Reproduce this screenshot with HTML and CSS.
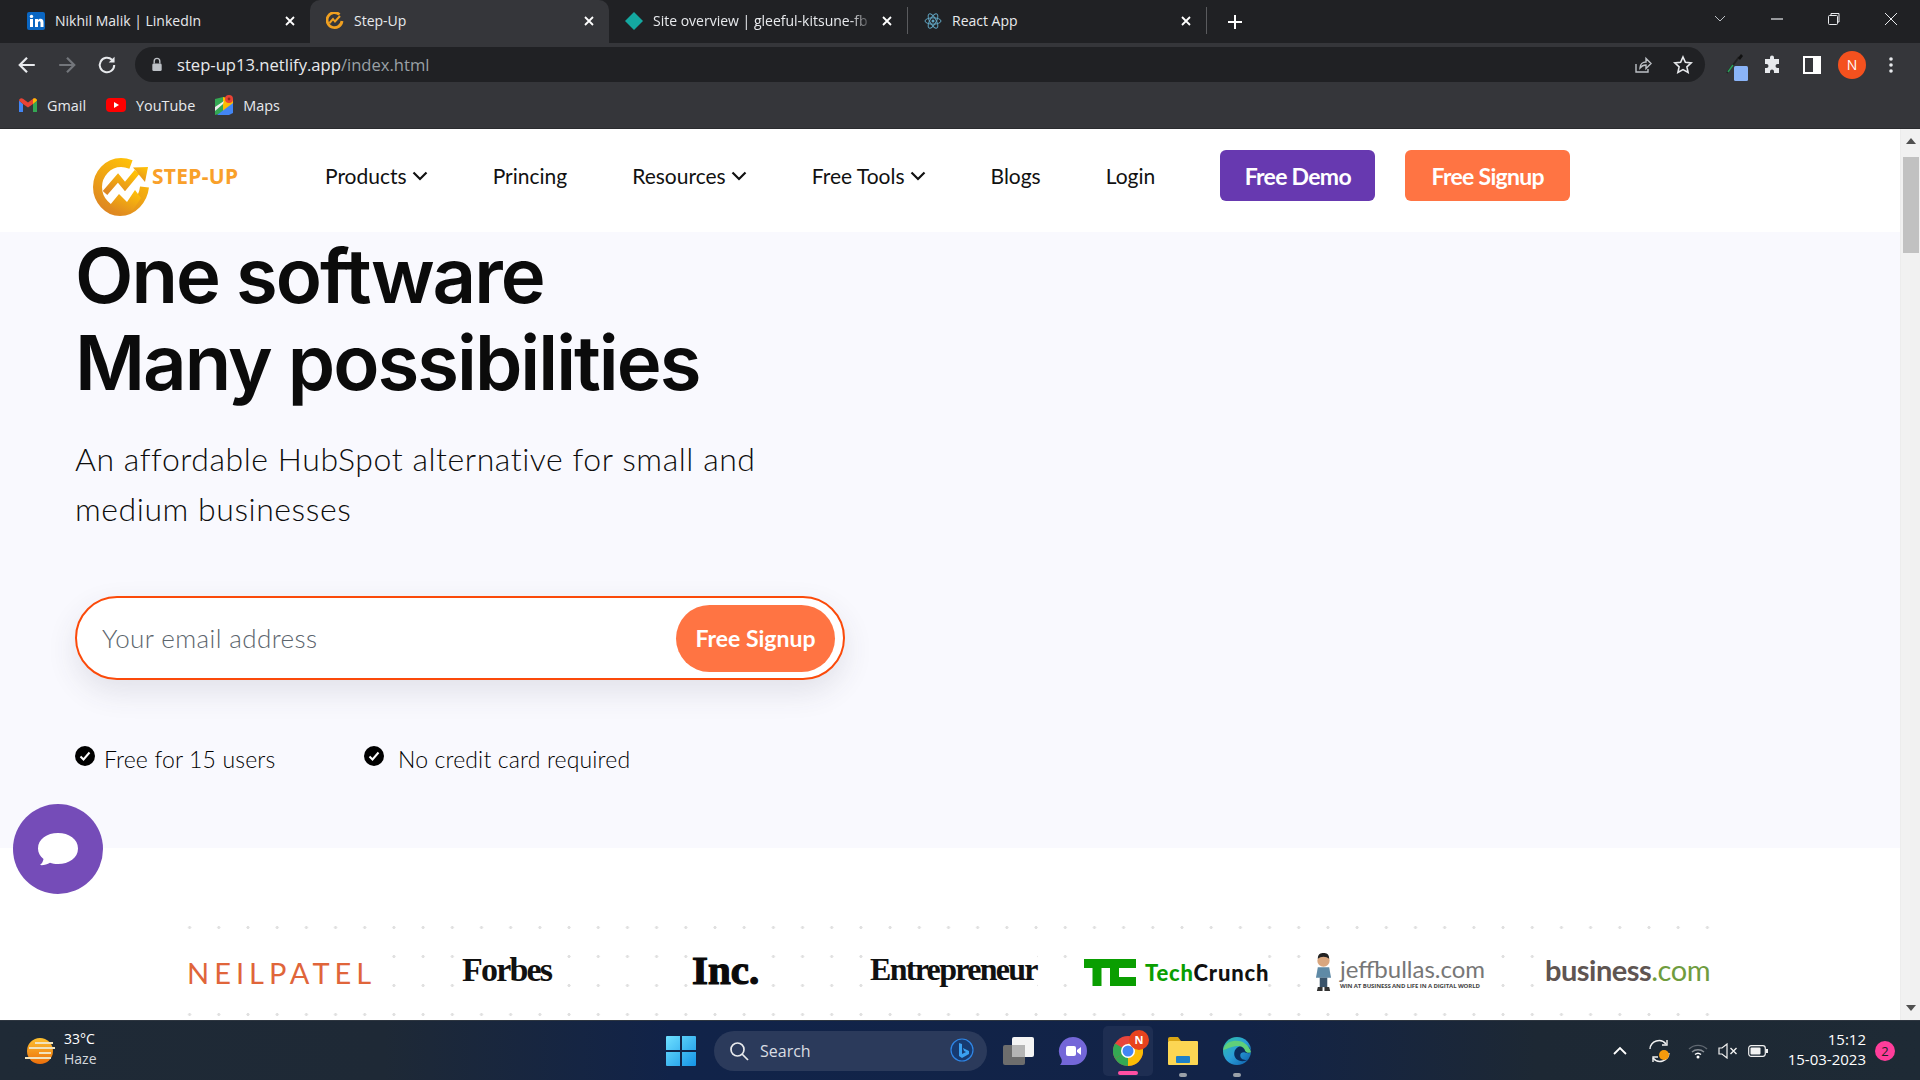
FILE: index.html
```html
<!DOCTYPE html>
<html lang="en">
<head>
<meta charset="utf-8">
<title>Step-Up</title>
<link rel="stylesheet" href="styles.css">
</head>
<body>
<header class="chrome">
  <div class="tabstrip">
    <div class="tab">
      <svg class="favicon" viewBox="0 0 18 18"><rect width="18" height="18" rx="2" fill="#0a66c2"/><rect x="3" y="7" width="3" height="8" fill="#fff"/><circle cx="4.5" cy="4.4" r="1.7" fill="#fff"/><path d="M8 7h3v1.2c.6-.9 1.500-1.400 2.600-1.400 2 0 2.900 1.300 2.900 3.600V15h-3v-4c0-1.100-.4-1.700-1.200-1.700S11 10 11 11v4H8z" fill="#fff"/></svg>
      <span class="tab-title">Nikhil Malik | LinkedIn</span>
      <svg class="tab-close" viewBox="0 0 12 12"><path d="M2 2l8 8M10 2l-8 8" stroke="#fff" stroke-width="1.800"/></svg>
    </div>
    <div class="tab tab-active">
      <svg class="favicon" viewBox="0 0 18 18"><path d="M13.500 2.500A7.500 7.500 0 1 0 16 9" fill="none" stroke="#f0a020" stroke-width="2.800"/><path d="M3.500 11l3.500-4 2 2.500L14 4" fill="none" stroke="#f0a020" stroke-width="2"/></svg>
      <span class="tab-title">Step-Up</span>
      <svg class="tab-close" viewBox="0 0 12 12"><path d="M2 2l8 8M10 2l-8 8" stroke="#fff" stroke-width="1.800"/></svg>
    </div>
    <div class="tab tab-sep">
      <svg class="favicon" viewBox="0 0 18 18"><path d="M9 0l9 9-9 9-9-9z" fill="#14a8a0"/></svg>
      <span class="tab-title tab-title-fade">Site overview | gleeful-kitsune-fb</span>
      <svg class="tab-close" viewBox="0 0 12 12"><path d="M2 2l8 8M10 2l-8 8" stroke="#fff" stroke-width="1.800"/></svg>
    </div>
    <div class="tab tab-sep">
      <svg class="favicon" viewBox="0 0 18 18"><g fill="none" stroke="#61a5c2" stroke-width="1"><ellipse cx="9" cy="9" rx="8" ry="3.200"/><ellipse cx="9" cy="9" rx="8" ry="3.200" transform="rotate(60 9 9)"/><ellipse cx="9" cy="9" rx="8" ry="3.200" transform="rotate(120 9 9)"/></g><circle cx="9" cy="9" r="1.500" fill="#61a5c2"/></svg>
      <span class="tab-title">React App</span>
      <svg class="tab-close" viewBox="0 0 12 12"><path d="M2 2l8 8M10 2l-8 8" stroke="#fff" stroke-width="1.800"/></svg>
    </div>
    <svg class="new-tab" viewBox="0 0 16 16"><path d="M8 1v14M1 8h14" stroke="#fff" stroke-width="2"/></svg>
    <div class="window-controls">
      <svg class="win-icon" viewBox="0 0 14 14"><path d="M2 4l5 5 5-5" fill="none" stroke="#bdc1c6" stroke-width="1"/></svg>
      <svg class="win-icon" viewBox="0 0 14 14"><path d="M1 7h12" stroke="#e8eaed" stroke-width="1.200"/></svg>
      <svg class="win-icon" viewBox="0 0 14 14"><path d="M4 3V1.500h8V10h-1.500" fill="none" stroke="#e8eaed"/><rect x="1.500" y="3.500" width="9" height="9" rx="1" fill="none" stroke="#e8eaed"/></svg>
      <svg class="win-icon" viewBox="0 0 14 14"><path d="M1 1l12 12M13 1L1 13" stroke="#e8eaed" stroke-width="1"/></svg>
    </div>
  </div>
  <div class="toolbar">
    <svg class="nav-btn" viewBox="0 0 18 18"><path d="M16 9H3M9 2.500L2.500 9 9 15.500" fill="none" stroke="#e8eaed" stroke-width="2"/></svg>
    <svg class="nav-btn" viewBox="0 0 18 18"><path d="M2 9h13M9 2.500L15.500 9 9 15.500" fill="none" stroke="#73767b" stroke-width="2"/></svg>
    <svg class="nav-btn" viewBox="0 0 18 18"><path d="M15.500 9A6.500 6.500 0 1 1 13.500 4.300" fill="none" stroke="#e8eaed" stroke-width="1.800"/><path d="M15.800 1.500v5.300h-5.300z" fill="#e8eaed"/></svg>
    <div class="omnibox">
      <svg class="lock" viewBox="0 0 12 16"><path d="M3 7V4.500a3 3 0 0 1 6 0V7" fill="none" stroke="#bdc1c6" stroke-width="1.500"/><rect x="1" y="7" width="10" height="8" rx="1.500" fill="#bdc1c6"/></svg>
      <span class="url"><span class="url-host">step-up13.netlify.app</span><span class="url-path">/index.html</span></span>
      <svg class="omni-icon" viewBox="0 0 20 20"><path d="M3 9v8h12v-3" fill="none" stroke="#bdc1c6" stroke-width="1.400"/><path d="M7 13c0-4 3-6 6-6V3.500l5 5-5 5V10c-2.500 0-4.500 1-6 3z" fill="none" stroke="#bdc1c6" stroke-width="1.400"/></svg>
      <svg class="omni-icon" viewBox="0 0 20 20"><path d="M10 2l2.400 5.300 5.800.6-4.300 3.900 1.200 5.700-5.100-2.900-5.100 2.900 1.200-5.700L1.800 7.900l5.800-.6z" fill="none" stroke="#e8eaed" stroke-width="1.600"/></svg>
    </div>
    <div class="toolbar-actions">
      <svg class="tool-ext" viewBox="0 0 24 30"><path d="M2 21L14 5" stroke="#222" stroke-width="2"/><path d="M3 20l5-7" stroke="#2aa05a" stroke-width="1.500"/><path d="M13 6l3-4 2 2-3 4z" fill="#111"/><rect x="9" y="14" width="14" height="15" rx="1.500" fill="#8ab4f8"/></svg>
      <svg class="tool-icon" viewBox="0 0 20 20"><path d="M7 2.500a2 2 0 0 1 4 0V4h5v5h-1.500a2 2 0 0 0 0 4H16v5h-5v-1.500a2 2 0 0 0-4 0V18H2v-5h1.500a2 2 0 0 0 0-4H2V4h5z" fill="#e8eaed"/></svg>
      <svg class="tool-icon" viewBox="0 0 20 20"><rect x="2" y="2" width="16" height="16" fill="none" stroke="#fff" stroke-width="2"/><rect x="11" y="2" width="7" height="16" fill="#fff"/></svg>
      <span class="avatar">N</span>
      <svg class="tool-menu" viewBox="0 0 6 18"><circle cx="3" cy="3" r="1.800" fill="#e8eaed"/><circle cx="3" cy="9" r="1.800" fill="#e8eaed"/><circle cx="3" cy="15" r="1.800" fill="#e8eaed"/></svg>
    </div>
  </div>
  <div class="bookmarks">
    <div class="bookmark">
      <svg class="bm-icon" viewBox="0 0 18 14"><path d="M0 2.500V14h4V6z" fill="#4285f4"/><path d="M14 6v8h4V2.500z" fill="#34a853"/><path d="M0 2.500C0 .5 2.300-.6 4 .7L9 4.500 14 .7C15.700-.6 18 .5 18 2.500L14 6 9 9.500 4 6z" fill="#ea4335"/><path d="M14 .7C15.700-.6 18 .5 18 2.500L14 6z" fill="#fbbc04"/></svg>
      <span>Gmail</span>
    </div>
    <div class="bookmark">
      <svg class="bm-icon bm-yt" viewBox="0 0 20 14"><rect width="20" height="14" rx="4" fill="#f00"/><path d="M8 4l5 3-5 3z" fill="#fff"/></svg>
      <span>YouTube</span>
    </div>
    <div class="bookmark">
      <svg class="bm-icon bm-maps" viewBox="0 0 18 20"><path d="M0 4l8-2v16l-8 2z" fill="#34a853"/><path d="M8 2l10 2v14L8 18z" fill="#fbbc04"/><path d="M2 20L18 8v10l-4 2z" fill="#4285f4"/><path d="M0 12L9 6 8 9 0 16z" fill="#eee"/><circle cx="14" cy="4" r="4" fill="#ea4335"/><circle cx="14" cy="4" r="1.400" fill="#8c2a20"/></svg>
      <span>Maps</span>
    </div>
  </div>
</header>

<div class="viewport">
  <div class="page">
    <nav class="site-nav">
      <a class="brand">
        <svg class="brand-mark" viewBox="0 0 56 58">
          <defs><linearGradient id="lg" x1="0.800" y1="0" x2="0.200" y2="1"><stop offset="0" stop-color="#ffc107"/><stop offset="1" stop-color="#de8722"/></linearGradient></defs>
          <path d="M38 6.500C34 5 31 4.500 28 4.500 15 4.500 4.500 16 4.500 29S15 53.500 27 53.500C40 53.500 50 42 51.500 29" fill="none" stroke="url(#lg)" stroke-width="9"/>
          <path d="M12 35L25 20l7 8.500L44 14" fill="none" stroke="url(#lg)" stroke-width="6"/>
          <path d="M40 9.500L55 9 52 24z" fill="url(#lg)"/>
          <path d="M17 47l9-11 8 8 8-12 6 8-8 12-14 4z" fill="url(#lg)"/>
        </svg>
        <span class="brand-name">STEP-UP</span>
      </a>
      <ul class="menu">
        <li class="menu-item">Products<svg class="chev" viewBox="0 0 16 10"><path d="M1.500 1.500L8 8l6.500-6.500" fill="none" stroke="#111" stroke-width="2.200"/></svg></li>
        <li class="menu-item">Princing</li>
        <li class="menu-item">Resources<svg class="chev" viewBox="0 0 16 10"><path d="M1.500 1.500L8 8l6.500-6.500" fill="none" stroke="#111" stroke-width="2.200"/></svg></li>
        <li class="menu-item">Free Tools<svg class="chev" viewBox="0 0 16 10"><path d="M1.500 1.500L8 8l6.500-6.500" fill="none" stroke="#111" stroke-width="2.200"/></svg></li>
        <li class="menu-item">Blogs</li>
        <li class="menu-item">Login</li>
      </ul>
      <a class="btn btn-demo">Free Demo</a>
      <a class="btn btn-signup">Free Signup</a>
    </nav>

    <section class="hero">
      <h1 class="hero-title">One software<br>Many possibilities</h1>
      <p class="hero-sub">An affordable HubSpot alternative for small and<br>medium businesses</p>
      <form class="signup">
        <span class="signup-placeholder">Your email address</span>
        <span class="signup-btn">Free Signup</span>
      </form>
      <div class="perks">
        <div class="perk perk-first">
          <svg class="check" viewBox="0 0 20 20"><circle cx="10" cy="10" r="10" fill="#000"/><path d="M5.500 10.500l3 3 6-7" fill="none" stroke="#fff" stroke-width="2"/></svg>
          <span>Free for 15 users</span>
        </div>
        <div class="perk perk-second">
          <svg class="check" viewBox="0 0 20 20"><circle cx="10" cy="10" r="10" fill="#000"/><path d="M5.500 10.500l3 3 6-7" fill="none" stroke="#fff" stroke-width="2"/></svg>
          <span>No credit card required</span>
        </div>
      </div>
    </section>

    <section class="press">
      <div class="press-field">
        <div class="press-row">
          <span class="logo logo-neil">NEILPATEL</span>
          <span class="logo logo-forbes">Forbes</span>
          <span class="logo logo-inc">Inc.</span>
          <span class="logo logo-entre">Entrepreneur</span>
          <span class="logo logo-tc">
            <svg class="tc-mark" viewBox="0 0 52 27"><path d="M0 0h26v9h-8.500v18h-9V9H0z" fill="#0a9e01"/><path d="M26 9h26v-9H26zM26 9v18h26v-9H35V9z" fill="#0a9e01"/></svg>
            <span class="tc-text"><span class="tc-green">Tech</span>Crunch</span>
          </span>
          <span class="logo logo-jeff">
            <svg class="jeff-mark" viewBox="0 0 18 40"><circle cx="9" cy="8" r="6.500" fill="#d9a67e"/><path d="M3 6c0-5 3-6 6-6s6 1 6 6c-3-3-9-3-12 0z" fill="#222"/><path d="M3 15h12l2 11H1z" fill="#5f8aa6"/><path d="M5 26h8v10H5z" fill="#39536a"/><path d="M3 36h5v4H2zM10 36h5l1 4h-6z" fill="#333"/></svg>
            <span class="jeff-text"><span class="jeff-name">jeffbullas.com</span><span class="jeff-tag">WIN AT BUSINESS AND LIFE IN A DIGITAL WORLD</span></span>
          </span>
          <span class="logo logo-biz">business<span class="biz-com">.com</span></span>
        </div>
      </div>
    </section>

    <button class="chat-fab" type="button" aria-label="Chat">
      <svg class="chat-icon" viewBox="0 0 42 34"><path d="M21 1c11 0 20 6 20 15.500S32 32 21 32c-3 0-6-.4-8-1.300C10 32.500 6 33.500 3 33c2-1.500 3-3.500 3.500-6C3 24 1 20.500 1 16.500 1 7 10 1 21 1z" fill="#fff"/></svg>
    </button>
  </div>
  <aside class="scrollbar">
    <svg class="sb-arrow" viewBox="0 0 10 6"><path d="M5 0l5 6H0z" fill="#505050"/></svg>
    <div class="sb-track"><div class="sb-thumb"></div></div>
    <svg class="sb-arrow" viewBox="0 0 10 6"><path d="M5 6L0 0h10z" fill="#505050"/></svg>
  </aside>
</div>

<footer class="taskbar">
  <div class="task-weather">
    <svg class="weather-icon" viewBox="0 0 30 26"><defs><linearGradient id="sun" x1="0" y1="0" x2="0" y2="1"><stop offset="0" stop-color="#fdc02f"/><stop offset="1" stop-color="#ec6f0c"/></linearGradient></defs><circle cx="15" cy="13" r="13" fill="url(#sun)"/><path d="M10 5h18M4 10h26M14 15h12M0 20h26" stroke="#f1e3bd" stroke-width="2"/></svg>
    <div class="weather-text"><span class="temp">33°C</span><span class="cond">Haze</span></div>
  </div>
  <div class="task-center">
    <svg class="start" viewBox="0 0 30 30"><defs><linearGradient id="win" x1="0" y1="0" x2="1" y2="1"><stop offset="0" stop-color="#6fe0ff"/><stop offset="1" stop-color="#1594e6"/></linearGradient></defs><path d="M0 1a1 1 0 0 1 1-1h13v14H0zM16 0h13a1 1 0 0 1 1 1v13H16zM0 16h14v14H1a1 1 0 0 1-1-1zM16 16h14v13a1 1 0 0 1-1 1H16z" fill="url(#win)"/></svg>
    <div class="search-pill">
      <svg class="search-icon" viewBox="0 0 20 20"><circle cx="8.500" cy="8.500" r="6.500" fill="none" stroke="#e8eaed" stroke-width="1.700"/><path d="M13 13l6 6" stroke="#e8eaed" stroke-width="1.700"/></svg>
      <span class="search-text">Search</span>
      <svg class="bing" viewBox="0 0 26 26"><circle cx="13" cy="12" r="11" fill="#173a70" stroke="#2f86e6" stroke-width="1.200"/><path d="M10 5l3 1v10l4-2-2-1-1-3 6 3v3l-7 4-3-2z" fill="#3aa0f0"/></svg>
    </div>
    <svg class="task-icon" viewBox="0 0 31 28"><rect y="8" width="22" height="20" rx="2" fill="#6d6d6d"/><rect x="9" width="22" height="20" rx="2" fill="#f4f4f4"/><rect x="9" y="8" width="13" height="12" fill="#b5b5b5"/></svg>
    <svg class="task-icon task-chat" viewBox="0 0 30 30"><path d="M15 1a14 14 0 0 1 0 28H2c2-2 2-4 1.500-6A14 14 0 0 1 15 1z" fill="#7467d8"/><rect x="8" y="10" width="10" height="10" rx="2" fill="#fff"/><path d="M19 14l4-3v8l-4-3z" fill="#fff"/></svg>
    <div class="task-active">
      <svg class="chrome-icon" viewBox="0 0 30 30"><circle cx="15" cy="15" r="15" fill="#e8453c"/><path d="M15 15L2 22.500A15 15 0 0 0 15 30z" fill="#34a853"/><path d="M15 15v15A15 15 0 0 0 28 7.500H15z" fill="#fbbc05"/><path d="M2 22.500A15 15 0 0 1 2 7.500L15 15z" fill="#34a853"/><circle cx="15" cy="15" r="7" fill="#fff"/><circle cx="15" cy="15" r="5.500" fill="#4285f4"/></svg>
      <span class="chrome-badge">N</span>
      <span class="active-bar"></span>
    </div>
    <div class="task-pinned">
      <svg class="task-icon" viewBox="0 0 30 28"><path d="M0 2a2 2 0 0 1 2-2h8l3 4h-13z" fill="#d9a514"/><rect y="4" width="30" height="24" rx="1" fill="#fcd653"/><rect x="8" y="19" width="14" height="7" rx="1" fill="#1d80c8"/></svg>
      <span class="pin-dot"></span>
    </div>
    <div class="task-pinned">
      <svg class="task-icon" viewBox="0 0 30 30"><defs><linearGradient id="edge" x1="0" y1="0" x2="1" y2="1"><stop offset="0" stop-color="#30c1a0"/><stop offset="0.500" stop-color="#2a9ed8"/><stop offset="1" stop-color="#0d5ba8"/></linearGradient></defs><circle cx="15" cy="15" r="15" fill="url(#edge)"/><path d="M30 16c0-4-3-7-8-7-6 0-10 4-10 9 0 4 3 8 9 8 2 0 4-.5 5.500-1.500-1 .2-8 .8-8-5 0-2 2-3.500 5-3 2 .3 4 2 6.500-.5z" fill="#0a2c5c"/><path d="M0 14C2 6 9 4 14 4c8 0 14 5 16 12-2 2-6 1-7-3-2-3-6-4-10-3C8 11 4 13 0 14z" fill="#5fd07a"/></svg>
      <span class="pin-dot"></span>
    </div>
  </div>
  <div class="task-tray">
    <svg class="tray-caret" viewBox="0 0 14 9"><path d="M1 8l6-6 6 6" fill="none" stroke="#fff" stroke-width="1.800"/></svg>
    <svg class="tray-sync" viewBox="0 0 24 24"><path d="M2 10A9 9 0 0 1 18 5M21 14a9 9 0 0 1-16 5" fill="none" stroke="#f2f2f2" stroke-width="1.400"/><path d="M19 1v5h-5M5 23v-5h5" fill="none" stroke="#f2f2f2" stroke-width="1.400"/><circle cx="16" cy="16" r="5" fill="#f59a0c"/></svg>
    <svg class="tray-icon" viewBox="0 0 20 16"><path d="M1 6a13 13 0 0 1 18 0" fill="none" stroke="#5f6770" stroke-width="1.400"/><path d="M4 9a9 9 0 0 1 12 0" fill="none" stroke="#8a9097" stroke-width="1.400"/><path d="M7 11.500a4.500 4.500 0 0 1 6 0" fill="none" stroke="#fff" stroke-width="1.400"/><circle cx="10" cy="14" r="1.500" fill="#fff"/></svg>
    <svg class="tray-icon" viewBox="0 0 20 16"><path d="M1 5h3l5-4v14l-5-4H1z" fill="none" stroke="#f2f2f2" stroke-width="1.200"/><path d="M12.500 5l6 6M18.500 5l-6 6" stroke="#f2f2f2" stroke-width="1.400"/></svg>
    <svg class="tray-icon" viewBox="0 0 20 12"><rect x=".7" y=".7" width="16.600" height="10.600" rx="2.500" fill="none" stroke="#f2f2f2" stroke-width="1.200"/><rect x="2.500" y="2.500" width="10" height="7" rx="1" fill="#f2f2f2"/><rect x="18" y="4" width="2" height="4" fill="#f2f2f2"/></svg>
    <div class="clock"><span>15:12</span><span>15-03-2023</span></div>
    <span class="notif">2</span>
  </div>
</footer>
</body>
</html>
```

FILE: styles.css
```css
* { box-sizing: border-box; }
html, body { margin: 0; padding: 0; }
body {
  width: 1920px;
  height: 1080px;
  overflow: hidden;
  display: flex;
  flex-direction: column;
  font-family: "Open Sans", "Noto Sans", sans-serif;
  background: #fff;
}

/* Browser chrome */
.chrome { height: 129px; flex: none; background: #35363a; color: #e8eaed; border-bottom: 1px solid #2a2b2e; }
.tabstrip { height: 43px; background: #202124; display: flex; align-items: stretch; padding-left: 11px; }
.tab { width: 299px; flex: none; display: flex; align-items: center; padding: 0 14px 2px 16px; font-size: 14px; color: #e8eaed; }
.tab-active { background: #35363a; border-radius: 10px 10px 0 0; }
.tab-sep { position: relative; border-right: 1px solid #5a5b5e; margin: 7px 0 9px; height: 27px; padding-bottom: 0; }
.favicon { width: 18px; height: 18px; flex: none; }
.tab-title { margin-left: 10px; flex: 1; white-space: nowrap; overflow: hidden; }
.tab-title-fade { -webkit-mask-image: linear-gradient(90deg, #000 90%, transparent); mask-image: linear-gradient(90deg, #000 90%, transparent); }
.tab-close { width: 12px; height: 12px; flex: none; margin-left: 8px; }
.new-tab { width: 16px; height: 16px; align-self: center; margin-left: 20px; flex: none; }
.window-controls { margin-left: auto; display: flex; align-items: center; gap: 43px; padding: 0 22px 6px 0; }
.win-icon { width: 14px; height: 14px; }

.toolbar { height: 44px; display: flex; align-items: center; padding: 0 0 1px 17px; }
.nav-btn { width: 20px; height: 20px; margin-right: 20px; flex: none; }
.omnibox { margin-left: -2px; width: 1570px; height: 35px; background: #202124; border-radius: 18px; display: flex; align-items: center; padding: 0 12px 0 16px; flex: none; }
.lock { width: 12px; height: 15px; flex: none; }
.url { margin-left: 14px; font-size: 16.6px; flex: 1; white-space: nowrap; }
.url-host { color: #e8eaed; }
.url-path { color: #9aa0a6; }
.omni-icon { width: 20px; height: 20px; margin-left: 20px; flex: none; }
.toolbar-actions { display: flex; align-items: center; margin-left: 20px; }
.tool-ext { width: 24px; height: 30px; margin-right: 14px; margin-top: 5px; }
.tool-icon { width: 20px; height: 20px; margin-right: 19px; }
.avatar { width: 28px; height: 28px; border-radius: 50%; background: #f4511e; color: #fff; font-size: 14px; display: flex; align-items: center; justify-content: center; margin-left: -3px; margin-right: 22px; }
.tool-menu { width: 6px; height: 18px; }

.bookmarks { height: 41px; display: flex; align-items: center; padding: 0 0 5px 19px; font-size: 14.4px; gap: 20px; }
.bookmark { display: flex; align-items: center; gap: 10px; color: #e8eaed; }
.bm-icon { width: 18px; height: 14px; }
.bm-yt { width: 20px; height: 14px; }
.bm-maps { width: 18px; height: 20px; }

/* Page */
.viewport { flex: 1; display: flex; min-height: 0; }
.page { flex: 1; position: relative; display: flex; flex-direction: column; background: #fff; min-width: 0; overflow: hidden; }

.site-nav { height: 103px; flex: none; background: #fff; display: flex; align-items: center; padding: 0 0 10px 93px; font-family: "Lato", sans-serif; }
.brand { display: flex; align-items: flex-start; width: 232px; flex: none; margin-top: 21px; }
.brand-mark { width: 56px; height: 58px; margin-top: 2px; flex: none; }
.brand-name { margin: 7px 0 0 3px; font-size: 21px; font-weight: 700; color: #f9a02a; letter-spacing: .3px; font-family: "Noto Sans", sans-serif; line-height: 26px; }
.menu { list-style: none; margin: 0; padding: 0; display: flex; align-items: center; gap: 65px; }
.menu-item { font-size: 21px; color: #111; display: flex; align-items: center; gap: 5px; white-space: nowrap; }
.chev { width: 16px; height: 10px; }
.btn { height: 51px; display: flex; align-items: center; justify-content: center; color: #fff; border-radius: 6px; font-size: 23px; font-weight: 700; flex: none; letter-spacing: -.7px; }
.btn-demo { width: 155px; background: #6739b0; margin-left: 65px; }
.btn-signup { width: 165px; background: #ff7443; margin-left: 30px; }

.hero { height: 616px; flex: none; background: #f9f9fe; padding: 0 0 0 75px; display: flex; flex-direction: column; }
.hero-title { margin: 0; font-family: "Inter", sans-serif; font-size: 76px; line-height: 87px; font-weight: 600; color: #0b0b0b; letter-spacing: -2px; }
.hero-sub { margin: 28px 0 0; font-family: "Lato", sans-serif; font-size: 32px; line-height: 50px; color: #0d0d0d; font-weight: 300; letter-spacing: .55px; white-space: nowrap; }
.signup { margin-top: 62px; width: 770px; height: 84px; border: 2px solid #fb4a0a; border-radius: 42px; background: #fff; display: flex; align-items: center; justify-content: space-between; padding: 0 8px 0 25px; box-shadow: 0 12px 30px rgba(60, 60, 80, .12); }
.signup-placeholder { font-family: "Lato", sans-serif; font-size: 26px; font-weight: 300; color: #5c656d; letter-spacing: .4px; }
.signup-btn { width: 159px; height: 67px; border-radius: 34px; background: #ff7443; color: #fff; font-family: "Lato", sans-serif; font-size: 23px; font-weight: 700; display: flex; align-items: center; justify-content: center; }
.perks { margin-top: 64px; display: flex; font-family: "Lato", sans-serif; font-size: 23px; font-weight: 300; color: #000; letter-spacing: .15px; }
.perk { display: flex; align-items: flex-start; line-height: 30px; }
.perk-first { width: 289px; gap: 9px; }
.perk-second { gap: 14px; }
.check { width: 20px; height: 20px; flex: none; margin-top: 2px; }

.press { flex: 1; background: #fff; padding: 65px 180px 0 175px; display: flex; }
.press-field { flex: 1; padding-top: 29px; background-image: radial-gradient(circle at center, #e0e0e0 1.300px, transparent 1.800px); background-size: 29.200px 29px; }
.press-row { display: flex; align-items: center; height: 60px; padding-left: 12px; }
.logo { display: flex; align-items: center; background: #fff; flex: none; height: 44px; }
.logo-neil { width: 189px; font-family: "Lato", sans-serif; font-size: 29px; letter-spacing: 5px; color: #e0653a; white-space: nowrap; }
.logo-forbes { margin-left: 86px; width: 90px; padding-bottom: 4px; font-family: "Liberation Serif", serif; font-weight: 700; font-size: 34px; letter-spacing: -1.800px; color: #111; }
.logo-inc { margin-left: 140px; width: 70px; padding-bottom: 4px; font-family: "Liberation Serif", serif; font-weight: 700; font-size: 41px; color: #0a0a0a; -webkit-text-stroke: 1.200px #0a0a0a; }
.logo-entre { margin-left: 108px; width: 167px; padding-bottom: 6px; font-family: "Liberation Serif", serif; font-weight: 700; font-size: 32px; letter-spacing: -1.700px; color: #111; white-space: nowrap; }
.logo-tc { margin-left: 47px; width: 184px; gap: 9px; }
.tc-mark { width: 52px; height: 27px; flex: none; }
.tc-text { font-family: "Lato", sans-serif; font-weight: 900; font-size: 22px; color: #111; letter-spacing: .8px; white-space: nowrap; }
.tc-green { color: #0a9e01; }
.logo-jeff { margin-left: 47px; width: 170px; gap: 8px; }
.jeff-mark { width: 17px; height: 40px; flex: none; }
.jeff-text { display: flex; flex-direction: column; width: 145px; }
.jeff-name { font-family: "Lato", sans-serif; font-size: 24px; line-height: 28px; color: #777; white-space: nowrap; }
.jeff-tag { font-size: 6px; line-height: 7px; color: #444; white-space: nowrap; font-weight: 700; letter-spacing: -.1px; }
.logo-biz { margin-left: 60px; width: 166px; padding-bottom: 6px; font-family: "Lato", sans-serif; font-size: 29px; font-weight: 700; color: #5f5552; letter-spacing: -.5px; white-space: nowrap; }
.biz-com { color: #6f9c3e; font-weight: 400; }

.chat-fab { position: absolute; left: 13px; top: 675px; width: 90px; height: 90px; border-radius: 50%; border: 0; background: #754cb8; padding: 0; display: flex; align-items: center; justify-content: center; }
.chat-icon { width: 42px; height: 34px; }

.scrollbar { width: 20px; flex: none; background: #f1f1f1; display: flex; flex-direction: column; align-items: center; padding: 9px 0; border-left: 1px solid #ececec; }
.sb-arrow { width: 10px; height: 6px; flex: none; }
.sb-track { flex: 1; width: 100%; padding-top: 13px; display: flex; justify-content: center; }
.sb-thumb { width: 16px; height: 96px; background: #c1c1c1; }

/* Taskbar */
.taskbar { height: 60px; flex: none; display: grid; grid-template-columns: 1fr auto 1fr; grid-template-rows: 1fr; align-items: center; background: linear-gradient(90deg, #1f2a36 0, #1e2936 20%, #112349 35%, #122347 65%, #1d2834 80%, #1e2a35 100%); border-top: 1px solid #2e3640; color: #fff; }
.task-weather { grid-column: 1; grid-row: 1; display: flex; align-items: center; padding-left: 25px; gap: 9px; }
.weather-icon { width: 30px; height: 26px; }
.weather-text { display: flex; flex-direction: column; font-size: 14px; line-height: 20px; padding-bottom: 3px; }
.temp { color: #fff; }
.cond { color: #d5d8dc; }
.task-center { display: flex; align-items: center; margin-left: 666px; justify-self: start; grid-column: 1 / 4; grid-row: 1; }
.start { width: 30px; height: 30px; flex: none; }
.search-pill { margin-left: 18px; width: 273px; height: 40px; border-radius: 20px; background: #2b3a5b; display: flex; align-items: center; padding: 0 12px 0 15px; flex: none; }
.search-icon { width: 20px; height: 20px; flex: none; }
.search-text { margin-left: 11px; font-size: 16px; color: #d9dde3; flex: 1; }
.bing { width: 26px; height: 26px; flex: none; }
.task-icon { width: 30px; height: 28px; flex: none; display: block; }
.search-pill + .task-icon { margin-left: 16px; width: 31px; }
.task-chat { margin-left: 24px; height: 30px; }
.task-active { position: relative; margin-left: 15px; width: 50px; height: 50px; border-radius: 5px; background: #1e2e52; display: flex; align-items: center; justify-content: center; }
.chrome-icon { width: 30px; height: 30px; }
.chrome-badge { position: absolute; right: 4px; top: 4px; width: 20px; height: 20px; border-radius: 50%; background: #e8431e; color: #fff; font-size: 11px; font-weight: 700; display: flex; align-items: center; justify-content: center; }
.active-bar { position: absolute; left: 15px; bottom: 1px; width: 20px; height: 4px; border-radius: 2px; background: #ff4fa3; }
.task-pinned { position: relative; margin-left: 15px; width: 30px; }
.task-pinned + .task-pinned { margin-left: 24px; }
.pin-dot { position: absolute; left: 11px; top: 36px; width: 8px; height: 4px; border-radius: 2px; background: #9aa0a8; }
.task-tray { grid-column: 3; grid-row: 1; display: flex; align-items: center; justify-content: flex-end; padding-right: 25px; }
.tray-caret { width: 14px; height: 9px; margin-right: 21px; }
.tray-sync { width: 24px; height: 24px; margin-right: 16px; }
.tray-icon { width: 20px; height: 16px; margin-right: 10px; }
.clock { display: flex; flex-direction: column; align-items: flex-end; margin-left: 10px; font-size: 15px; line-height: 20px; color: #fff; padding-bottom: 4px; }
.notif { margin-left: 9px; width: 20px; height: 20px; border-radius: 50%; background: #ff3d9a; color: #222; font-size: 13px; display: flex; align-items: center; justify-content: center; }
```
